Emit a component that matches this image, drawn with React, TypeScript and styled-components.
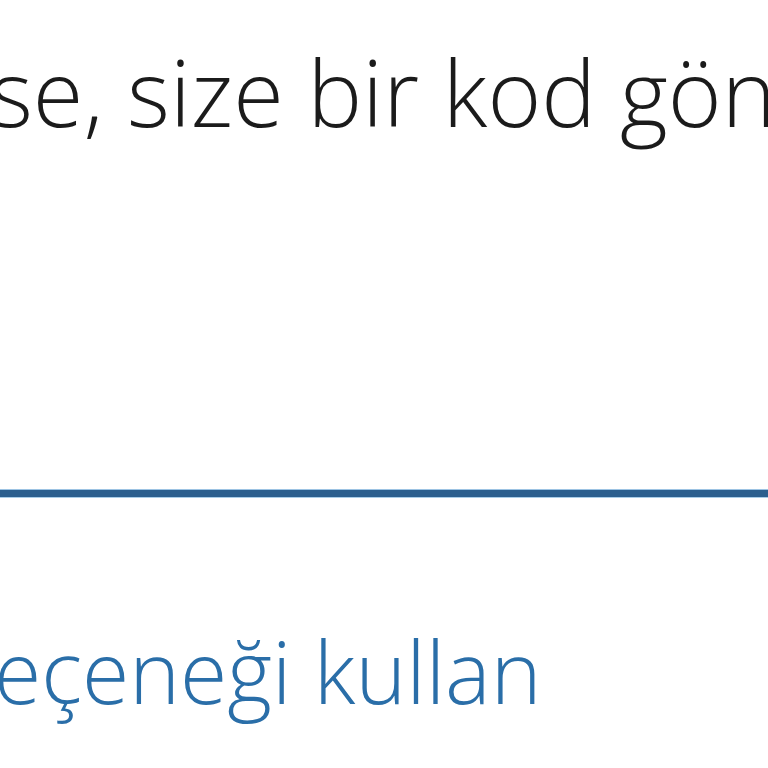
import React from 'react';
import styled, { createGlobalStyle } from 'styled-components';

const Global = createGlobalStyle`
	html, body {
		margin: 0;
		padding: 0;
		background: #ffffff;
	}
	body {
		font-family: 'Open Sans', 'Noto Sans', 'DejaVu Sans', sans-serif;
	}
`;

const Page = styled.div`
	width: 768px;
	height: 768px;
	overflow: hidden;
	display: flex;
	flex-direction: column;
	background: #ffffff;
`;

const Description = styled.p`
	margin: 32px 0 0 -10px;
	font-size: 92px;
	font-weight: 350;
	line-height: 120px;
	color: #1b1b1b;
	white-space: nowrap;
`;

const InputField = styled.div`
	margin-top: 338px;
	height: 7px;
	background: #2c5f8e;
	box-shadow: 0 -1px 0 #9cc3e3, 0 1px 0 #a9cde8;
`;

const OptionLink = styled.a`
	display: block;
	margin: 118px 0 0 -6px;
	font-size: 86px;
	font-weight: 350;
	line-height: 112px;
	color: #2a6ea8;
	text-decoration: none;
	white-space: nowrap;
`;

function App() {
	return (
		<Page>
			<Global />
			<Description>se, size bir kod gönder</Description>
			<InputField />
			<OptionLink href="#">eçeneği kullan</OptionLink>
		</Page>
	);
}

export default App;
